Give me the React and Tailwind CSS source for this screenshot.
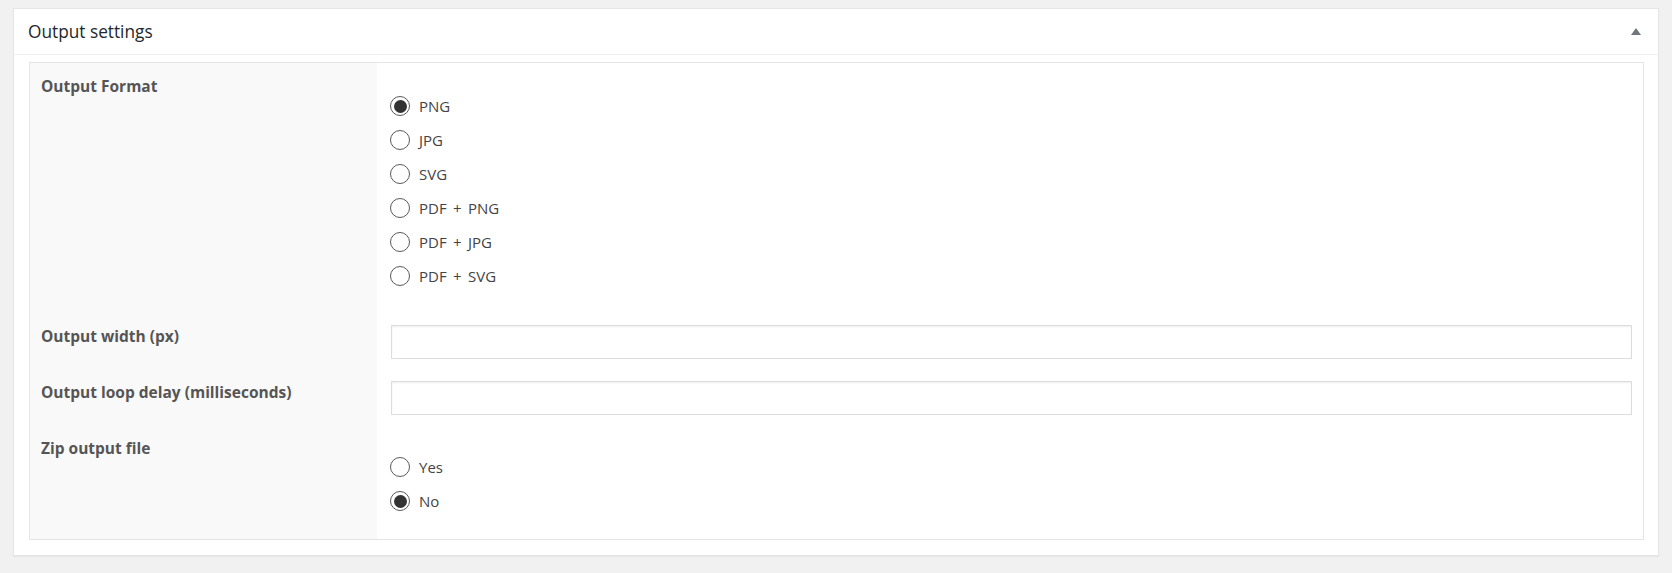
import React, { useState } from "react";

const formats = ["PNG", "JPG", "SVG", "PDF + PNG", "PDF + JPG", "PDF + SVG"];

const Radio = ({ label, checked, onChange }) => (
  <label className="flex h-[34px] items-center gap-[9px] cursor-pointer select-none">
    <span className="flex h-[20px] w-[20px] items-center justify-center rounded-full border border-[#5a5a5a] bg-white">
      {checked && <span className="h-[13px] w-[13px] rounded-full bg-[#333]" />}
    </span>
    <input type="radio" className="hidden" checked={checked} onChange={onChange} />
    <span className="text-[15px] text-[#444] [word-spacing:2.5px]">{label}</span>
  </label>
);

const Label = ({ children, className = "" }) => (
  <div
    className={`w-[347px] shrink-0 bg-[#f9f9f9] pl-[11px] text-[15.5px] leading-[20px] font-bold text-[#555] ${className}`}
  >
    {children}
  </div>
);

export default function App() {
  const [format, setFormat] = useState("PNG");
  const [zip, setZip] = useState("No");
  const [open, setOpen] = useState(true);

  return (
    <div className="min-h-[573px] bg-[#f1f1f1] px-[13px] pt-[8px]" style={{ fontFamily: '"Open Sans", "Noto Sans", sans-serif' }}>
      <div className="border border-[#e5e5e5] bg-white shadow-[0_1px_1px_rgba(0,0,0,0.04)]">
        {/* header */}
        <div className="flex h-[46px] items-center justify-between border-b border-[#eee] pl-[14px] pr-[17px]">
          <h2 className="text-[17.25px] text-[#23282d]">Output settings</h2>
          <button onClick={() => setOpen(!open)} className="cursor-pointer">
            <svg width="10" height="7" viewBox="0 0 10 7">
              <polygon points="5,0 10,7 0,7" fill="#72777c" />
            </svg>
          </button>
        </div>

        {/* body */}
        {open && (
          <div className="pt-[7px] pl-[15px] pr-[14px] pb-[15px]">
            <div className="border border-[#e5e5e5]">
              {/* Output Format */}
              <div className="flex">
                <Label className="pt-[13px]">Output Format</Label>
                <div className="flex-1 pl-[13px] pt-[26px] pb-[21px]">
                  {formats.map((f) => (
                    <Radio key={f} label={f} checked={format === f} onChange={() => setFormat(f)} />
                  ))}
                </div>
              </div>

              {/* Output width */}
              <div className="flex">
                <Label className="pt-[12px]">Output width (px)</Label>
                <div className="flex-1 pl-[14px] pr-[11px] py-[11px]">
                  <input
                    type="text"
                    className="h-[34px] w-full border border-[#ddd] bg-white px-2 text-[15px] shadow-[inset_0_1px_2px_rgba(0,0,0,0.07)] outline-none"
                  />
                </div>
              </div>

              {/* Output loop delay */}
              <div className="flex">
                <Label className="pt-[12px]">Output loop delay (milliseconds)</Label>
                <div className="flex-1 pl-[14px] pr-[11px] py-[11px]">
                  <input
                    type="text"
                    className="h-[34px] w-full border border-[#ddd] bg-white px-2 text-[15px] shadow-[inset_0_1px_2px_rgba(0,0,0,0.07)] outline-none"
                  />
                </div>
              </div>

              {/* Zip output file */}
              <div className="flex">
                <Label className="pt-[12px]">Zip output file</Label>
                <div className="flex-1 pl-[13px] pt-[24px] pb-[21px]">
                  {["Yes", "No"].map((z) => (
                    <Radio key={z} label={z} checked={zip === z} onChange={() => setZip(z)} />
                  ))}
                </div>
              </div>
            </div>
          </div>
        )}
      </div>
    </div>
  );
}
